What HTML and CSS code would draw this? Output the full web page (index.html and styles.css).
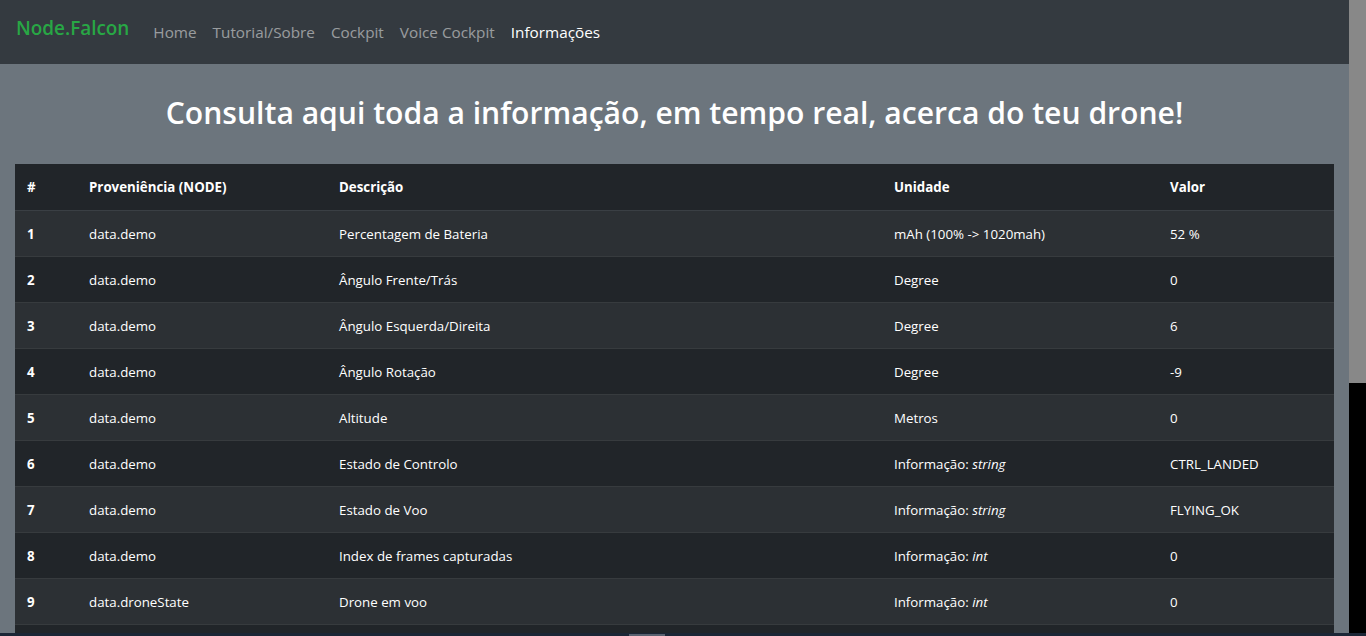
FILE: index.html
```html
<!DOCTYPE html>
<html lang="pt">
<head>
<meta charset="utf-8">
<title>Node.Falcon - Informações</title>
<link rel="stylesheet" href="styles.css">
</head>
<body>
<div class="window">
  <div class="page">
    <nav class="navbar">
      <a class="brand" href="#">Node.Falcon</a>
      <ul class="nav-links">
        <li><a href="#">Home</a></li>
        <li><a href="#">Tutorial/Sobre</a></li>
        <li><a href="#">Cockpit</a></li>
        <li><a href="#">Voice Cockpit</a></li>
        <li><a class="active" href="#">Informações</a></li>
      </ul>
    </nav>
    <h1 class="title">Consulta aqui toda a informação, em tempo real, acerca do teu drone!</h1>
    <div class="container">
      <table class="data-table">
        <thead>
          <tr>
            <th class="c1">#</th>
            <th class="c2">Proveniência (NODE)</th>
            <th class="c3">Descrição</th>
            <th class="c4">Unidade</th>
            <th class="c5">Valor</th>
          </tr>
        </thead>
        <tbody>
          <tr><th>1</th><td>data.demo</td><td>Percentagem de Bateria</td><td>mAh (100% -&gt; 1020mah)</td><td>52 %</td></tr>
          <tr><th>2</th><td>data.demo</td><td>Ângulo Frente/Trás</td><td>Degree</td><td>0</td></tr>
          <tr><th>3</th><td>data.demo</td><td>Ângulo Esquerda/Direita</td><td>Degree</td><td>6</td></tr>
          <tr><th>4</th><td>data.demo</td><td>Ângulo Rotação</td><td>Degree</td><td>-9</td></tr>
          <tr><th>5</th><td>data.demo</td><td>Altitude</td><td>Metros</td><td>0</td></tr>
          <tr><th>6</th><td>data.demo</td><td>Estado de Controlo</td><td>Informação: <em>string</em></td><td>CTRL_LANDED</td></tr>
          <tr><th>7</th><td>data.demo</td><td>Estado de Voo</td><td>Informação: <em>string</em></td><td>FLYING_OK</td></tr>
          <tr><th>8</th><td>data.demo</td><td>Index de frames capturadas</td><td>Informação: <em>int</em></td><td>0</td></tr>
          <tr><th>9</th><td>data.droneState</td><td>Drone em voo</td><td>Informação: <em>int</em></td><td>0</td></tr>
          <tr class="row-empty"><th></th><td></td><td></td><td></td><td></td></tr>
        </tbody>
      </table>
    </div>
  </div>
  <div class="scrollbar">
    <div class="scroll-thumb"></div>
    <div class="scroll-track"></div>
  </div>
</div>
<div class="bottom-edge"><div class="edge-mark"></div></div>
</body>
</html>
```

FILE: styles.css
```css
html, body {
  margin: 0;
  padding: 0;
  height: 636px;
  overflow: hidden;
}

body {
  display: flex;
  flex-direction: column;
  font-family: "Open Sans", "Noto Sans", "Liberation Sans", sans-serif;
  color: #fff;
  background: #6c757d;
}

.window {
  display: flex;
  height: 633px;
  overflow: hidden;
}

.page {
  flex: 0 0 1349px;
  background: #6c757d;
  overflow: hidden;
}

.scrollbar {
  flex: 0 0 17px;
  display: flex;
  flex-direction: column;
}

.scroll-thumb {
  height: 383px;
  background: #888888;
}

.scroll-track {
  flex: 1;
  background: #000;
}

.bottom-edge {
  height: 3px;
  background: #1b2636;
  display: flex;
  padding-left: 629px;
}

.edge-mark {
  width: 36px;
  height: 2px;
  background: #5a6270;
  margin-top: 1px;
}

/* navbar */
.navbar {
  height: 64px;
  background: #343a40;
  display: flex;
  align-items: center;
  padding: 0 16px;
  box-sizing: border-box;
}

.brand {
  color: #28a745;
  font-size: 18.9px;
  font-weight: 600;
  text-decoration: none;
  margin-right: 24px;
  position: relative;
  top: -4px;
}

.nav-links {
  display: flex;
  list-style: none;
  margin: 0;
  padding: 0;
  gap: 16px;
}

.nav-links a {
  color: rgba(255, 255, 255, 0.5);
  text-decoration: none;
  font-size: 15.3px;
}

.nav-links a.active {
  color: #fff;
}

/* title */
.title {
  margin: 31px 0 33px;
  text-align: center;
  font-size: 30.1px;
  font-weight: 600;
  line-height: 36px;
}

/* table */
.container {
  padding: 0 15px;
}

.data-table {
  width: 1319px;
  border-collapse: collapse;
  table-layout: fixed;
  font-size: 13.3px;
  background: #212529;
}

.data-table th,
.data-table td {
  text-align: left;
  padding: 0 12px;
  height: 45px;
  vertical-align: middle;
  border-top: 1px solid #373b3e;
  white-space: nowrap;
}

.data-table thead th {
  font-weight: 700;
  border-top: 0;
  height: 46px;
  border-bottom: 1px solid #3a3f44;
}

.data-table tbody th {
  font-weight: 700;
}

.data-table tbody tr:nth-child(odd) {
  background: #2c3034;
}

.data-table tbody tr:nth-child(even) {
  background: #212529;
}

.data-table em {
  font-style: italic;
}

.c1 { width: 38px; }
.c2 { width: 226px; }
.c3 { width: 531px; }
.c4 { width: 252px; }
.c5 { width: 152px; }
```
